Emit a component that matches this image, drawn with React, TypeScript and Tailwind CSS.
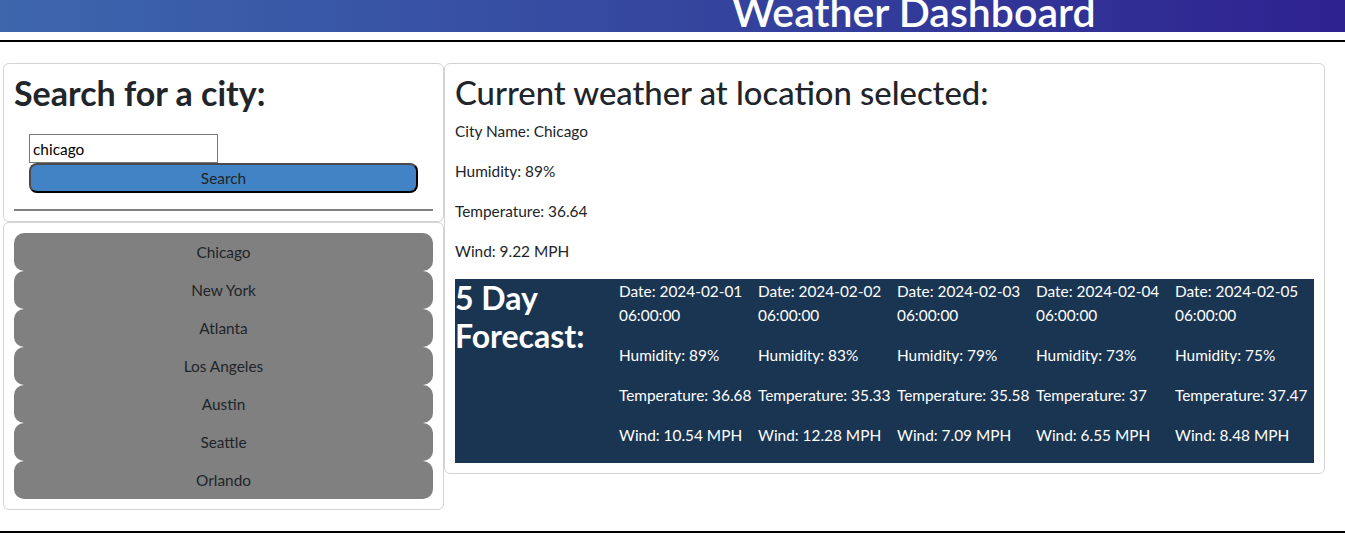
import React from 'react';

const CITIES = ['Chicago', 'New York', 'Atlanta', 'Los Angeles', 'Austin', 'Seattle', 'Orlando'];

const FORECAST = [
  { date: '2024-02-01', humidity: '89%', temp: '36.68', wind: '10.54' },
  { date: '2024-02-02', humidity: '83%', temp: '35.33', wind: '12.28' },
  { date: '2024-02-03', humidity: '79%', temp: '35.58', wind: '7.09' },
  { date: '2024-02-04', humidity: '73%', temp: '37', wind: '6.55' },
  { date: '2024-02-05', humidity: '75%', temp: '37.47', wind: '8.48' },
];

const font = { fontFamily: 'Lato, "Noto Sans", sans-serif' };

const App: React.FC = () => {
  return (
    <div className="min-h-[549px] bg-white text-[#212529] text-[15.4px] leading-6" style={font}>
      <header className="h-[32px] overflow-hidden bg-gradient-to-r from-[#3d66ad] to-[#2e2190]">
        <h1 className="pl-[732px] -mt-[12px] text-[41px] leading-[48px] font-semibold text-white whitespace-nowrap">
          Weather Dashboard
        </h1>
      </header>
      <hr className="mt-[8px] border-0 border-t-2 border-black" />

      <main className="flex items-start pl-[3px] pt-[21px]">
        <div className="w-[441px] flex flex-col">
          <section className="border border-[#d3d3d3] rounded-[6px] p-[10px]">
            <h2 className="text-[34px] leading-[38px] font-bold mb-[8px]">Search for a city:</h2>
            <form className="pl-[15px] pt-[14px] pr-[15px] flex flex-col items-start" onSubmit={(e) => e.preventDefault()}>
              <input
                defaultValue="chicago"
                className="w-[189px] h-[29px] border border-[#767676] px-[3px] text-[15.4px] text-black"
              />
              <button className="w-[389px] h-[30px] bg-[#4183c4] border-2 border-[#4a4a4a] border-b-black border-r-black rounded-[8px] text-[15.4px] leading-5 text-[#212529]">
                Search
              </button>
            </form>
            <hr className="mt-[16px] border-0 border-t-2 border-[#808080]" />
          </section>
          <section className="border border-[#d3d3d3] rounded-[6px] p-[10px] flex flex-col">
            {CITIES.map((c) => (
              <button key={c} className="h-[38px] bg-[#808080] rounded-[10px] text-[#212529] text-[15.4px]">
                {c}
              </button>
            ))}
          </section>
        </div>

        <section className="w-[881px] border border-[#d3d3d3] rounded-[6px] p-[10px]">
          <h2 className="text-[32.8px] leading-[38px] font-medium mb-[7px]">Current weather at location selected:</h2>
          <p className="mb-4">City Name: Chicago</p>
          <p className="mb-4">Humidity: 89%</p>
          <p className="mb-4">Temperature: 36.64</p>
          <p className="mb-4">Wind: 9.22 MPH</p>
          <div className="flex bg-[#193552] text-white">
            <h2 className="w-[164px] shrink-0 text-[32px] leading-[38px] font-bold">5 Day Forecast:</h2>
            {FORECAST.map((f) => (
              <div key={f.date} className="flex-1 whitespace-nowrap">
                <p className="mb-4">
                  Date: {f.date}
                  <br />
                  06:00:00
                </p>
                <p className="mb-4">Humidity: {f.humidity}</p>
                <p className="mb-4">Temperature: {f.temp}</p>
                <p className="mb-4">Wind: {f.wind} MPH</p>
              </div>
            ))}
          </div>
        </section>
      </main>

      <hr className="mt-[21px] border-0 border-t-2 border-black" />
    </div>
  );
};

export default App;
